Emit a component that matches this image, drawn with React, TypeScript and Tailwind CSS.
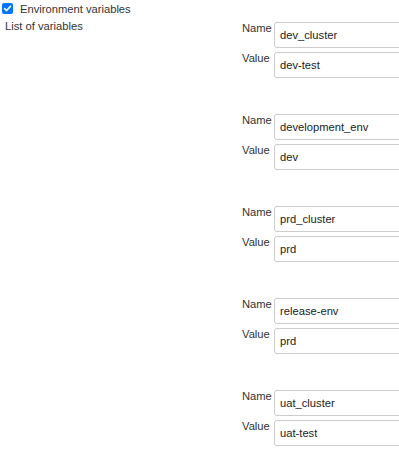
const vars = [
  { name: 'dev_cluster', value: 'dev-test' },
  { name: 'development_env', value: 'dev' },
  { name: 'prd_cluster', value: 'prd' },
  { name: 'release-env', value: 'prd' },
  { name: 'uat_cluster', value: 'uat-test' }
]

function Field({ label, value }: { label: string; value: string }) {
  return (
    <div className="flex items-start">
      <div className="w-[32px] shrink-0 leading-[13px] text-[#333]">{label}</div>
      <input
        readOnly
        value={value}
        className="h-[26px] w-[200px] shrink-0 rounded-[3px] border border-[#ccc] bg-white pl-[5px] text-[11.2px] text-[#222] outline-none"
        style={{ fontFamily: '"Liberation Sans", Arial, sans-serif' }}
      />
    </div>
  )
}

export default function App() {
  return (
    <div
      className="relative h-[452px] w-[399px] overflow-hidden bg-white text-[11.2px] text-[#333]"
      style={{ fontFamily: '"Liberation Sans", Arial, sans-serif' }}
    >
      <div className="flex h-[20px] items-start pt-[3px]">
        <div className="ml-[2px] flex h-[11px] w-[11px] items-center justify-center rounded-[2px] bg-[#0075ff]">
          <svg width="9" height="9" viewBox="0 0 10 10">
            <path
              d="M1.8 5.2 L4 7.3 L8.3 2.6"
              fill="none"
              stroke="white"
              strokeWidth="1.8"
              strokeLinecap="round"
              strokeLinejoin="round"
            />
          </svg>
        </div>
        <span className="ml-[7px] leading-[13px]">Environment variables</span>
      </div>
      <div className="flex items-start">
        <div className="w-[242px] shrink-0 pl-[5px] leading-[13px]">List of variables</div>
        <div className="flex shrink-0 flex-col gap-[36px] pt-[2px]">
          {vars.map((v) => (
            <div key={v.name} className="flex flex-col gap-[4px]">
              <Field label="Name" value={v.name} />
              <Field label="Value" value={v.value} />
            </div>
          ))}
        </div>
      </div>
    </div>
  )
}
